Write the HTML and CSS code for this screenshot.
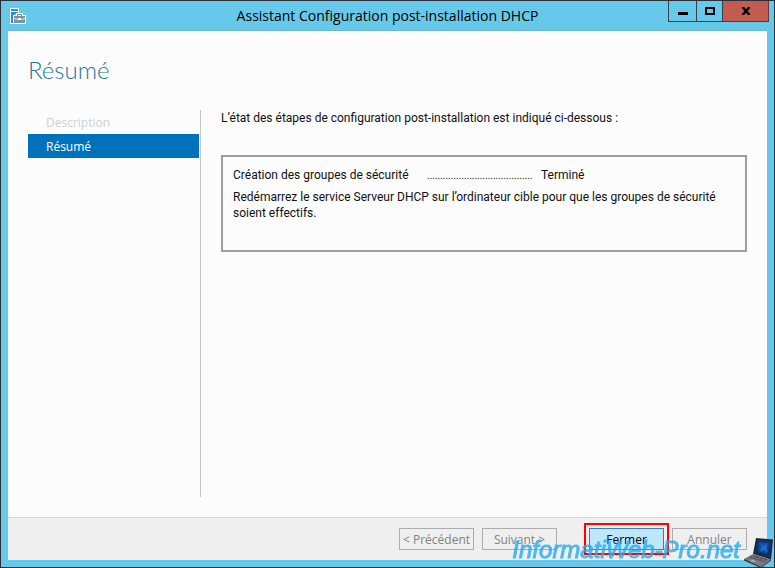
FILE: index.html
```html
<!DOCTYPE html>
<html lang="fr">
<head>
  <meta charset="UTF-8" />
  <meta name="viewport" content="width=device-width, initial-scale=1.0" />
  <title>Assistant Configuration post-installation DHCP</title>
  <link rel="stylesheet" href="styles.css">
</head>
<body>
  <div class="window">
    <header class="titlebar">
      <svg class="app-icon" viewBox="0 0 16 16" width="16" height="16" aria-hidden="true">
        <path d="M0 0h9v6H4v10H0z" fill="#fff" />
        <path d="M1 1h7v2H1zM1 4h7v2H4v9H1z" fill="#2f8fd6" />
        <path d="M6 7V5h7v2h3v9H3V7z" fill="#fff" />
        <path d="M4 8h11v7H4z" fill="#7b95a5" />
        <path d="M7.500 8V6.500h4V8" fill="none" stroke="#6f8896" />
        <path d="M4 10.500l4 1h3l4-1" fill="none" stroke="#dfe8ec" />
        <path d="M8 10h3v2H8z" fill="#fff" />
      </svg>
      <h1 class="window-title">Assistant Configuration post-installation DHCP</h1>
      <div class="window-controls">
        <button class="control minimize" aria-label="Réduire">
          <svg viewBox="0 0 10 8" width="10" height="8"><path d="M0 5h10v3H0z" /></svg>
        </button>
        <button class="control maximize" aria-label="Agrandir">
          <svg viewBox="0 0 10 8" width="10" height="8"><path d="M1 1h8v6H1z" fill="none" stroke="#000" stroke-width="2" /></svg>
        </button>
        <button class="control close" aria-label="Fermer la fenêtre">
          <svg viewBox="0 0 10 8" width="10" height="8"><path d="M1.500 0l7 8M8.500 0l-7 8" stroke="#000" stroke-width="2.400" /></svg>
        </button>
      </div>
    </header>

    <div class="content">
      <h2 class="page-title">Résumé</h2>
      <div class="columns">
        <nav class="steps">
          <a class="step disabled">Description</a>
          <a class="step active" href="#" aria-current="step">Résumé</a>
        </nav>
        <main class="summary">
          <p class="intro">L’état des étapes de configuration post-installation est indiqué ci-dessous :</p>
          <div class="results">
            <div class="result">
              <span class="task">Création des groupes de sécurité</span>
              <span class="dots">........................................</span>
              <span class="status">Terminé</span>
            </div>
            <p class="note">Redémarrez le service Serveur DHCP sur l’ordinateur cible pour que les groupes de sécurité soient effectifs.</p>
          </div>
        </main>
      </div>
    </div>

    <footer class="footer">
      <button class="btn" disabled>&lt; Précédent</button>
      <button class="btn" disabled>Suivant &gt;</button>
      <button class="btn primary">Fermer</button>
      <button class="btn" disabled>Annuler</button>
    </footer>
  </div>

  <div class="watermark">
    <span class="watermark-text">InformatiWeb-Pro.net</span>
    <svg viewBox="0 0 31 31" width="31" height="31" aria-hidden="true">
      <path d="M12 1l17 1.500-2 20L9 17z" fill="#24262c" />
      <path d="M13.500 2.500L27.500 4l-1.700 16L11 15.500z" fill="#0b3076" />
      <path d="M15 5l10 1-2 11-9-3z" fill="#0e4c9e" />
      <path d="M17 6l2 3 4-2-1 4 2 4-4-2-4 1 2-4z" fill="#1b70c8" />
      <path d="M9 17l18 5.500L17 30 0 22z" fill="#77777d" />
      <path d="M10 18l14 4.500-4 2.500L5 20.500z" fill="#55565c" />
      <path d="M8 19.500l14 4.500M11 18.500l-3 3M16 20l-3 3M20 22l-3 2" stroke="#85868c" stroke-width=".5" />
      <path d="M8 22.500l4 1.500-2 1.500L6 24z" fill="#aaaab0" />
      <path d="M0 22l17 8 10-7.500v1L17 31 0 23.500z" fill="#292a2e" />
    </svg>
  </div>
</body>
</html>
```
FILE: styles.css
```css
* {
  box-sizing: border-box;
}

body {
  margin: 0;
  height: 100vh;
  font-family: 'Open Sans', 'Noto Sans', sans-serif;
  font-size: 12px;
  line-height: 16px;
  color: #111;
}

h1, h2, p {
  margin: 0;
  font-weight: normal;
}

button {
  padding: 0;
  font-family: inherit;
  font-size: 12px;
}

.window {
  display: flex;
  flex-direction: column;
  min-height: 100vh;
  padding: 0 7px 7px;
  border: 1px solid #2c2f38;
  background: #66c9e9;
}

/* Title bar */
.titlebar {
  display: grid;
  grid-template-columns: 1fr auto 1fr;
  align-items: center;
  height: 29px;
}

.app-icon {
  margin-left: 2px;
}

.window-title {
  font-size: 14px;
  line-height: 20px;
  color: #000;
}

.window-controls {
  display: flex;
  align-self: start;
  justify-self: end;
  margin-right: -2px;
}

.control {
  display: flex;
  align-items: center;
  justify-content: center;
  width: 26px;
  height: 21px;
  border: 1px solid #33414a;
  border-top: none;
  border-right: none;
  background: #66c9e9;
}

.control.minimize {
  width: 28px;
}

.control.close {
  width: 47px;
  border-right: 1px solid #5c3a3a;
  background: #c45b52;
}

/* Content */
.content {
  display: flex;
  flex: 1;
  flex-direction: column;
  padding: 23px 20px 20px;
  border-top: 1px solid #73b3cf;
  background: #fcfcfc;
}

.page-title {
  margin-bottom: 24px;
  font-family: Lato, 'Open Sans', sans-serif;
  font-size: 24px;
  font-weight: 300;
  line-height: 32px;
  color: #1f7a94;
}

.columns {
  display: flex;
  flex: 1;
}

.steps {
  width: 173px;
  padding-right: 1px;
  border-right: 1px solid #c4c4c4;
}

.step {
  display: block;
  padding: 2px 18px 0;
  line-height: 22px;
  color: #fff;
  text-decoration: none;
}

.step.disabled {
  color: #d0d0d0;
}

.step.active {
  background: #0072bc;
}

.summary {
  flex: 1;
  padding-left: 20px;
  font-family: Roboto, 'Open Sans', sans-serif;
}

.intro {
  margin-bottom: 29px;
}

.results {
  min-height: 97px;
  padding: 10px;
  border: 2px solid #9f9f9f;
}

.result {
  display: flex;
  align-items: baseline;
  margin-bottom: 5px;
}

.task {
  width: 194px;
}

.dots {
  width: 104px;
  margin-right: 10px;
  font-size: 10px;
}

/* Footer */
.footer {
  display: flex;
  justify-content: flex-end;
  gap: 8px;
  padding: 10px 20px;
  border-top: 1px solid #d9d9d9;
  background: #efefef;
}

.btn {
  width: 75px;
  height: 22px;
  border: 1px solid #adadad;
  background: #efefef;
  color: #838383;
}

.btn.primary {
  margin-left: 24px;
  border-color: #3c7fb1;
  outline: 2px solid #f00;
  outline-offset: 3px;
  background: #bee6fd;
  color: #000;
}

/* Site signature over the bottom right corner */
.watermark {
  position: fixed;
  right: 0;
  bottom: 0;
  display: flex;
  align-items: flex-start;
  gap: 4px;
  pointer-events: none;
}

.watermark-text {
  font-family: 'Liberation Sans', Arial, sans-serif;
  font-size: 24px;
  font-style: italic;
  line-height: 26px;
  color: #26aaf0;
  opacity: 0.8;
  -webkit-text-stroke: 1px #26aaf0;
}
```
